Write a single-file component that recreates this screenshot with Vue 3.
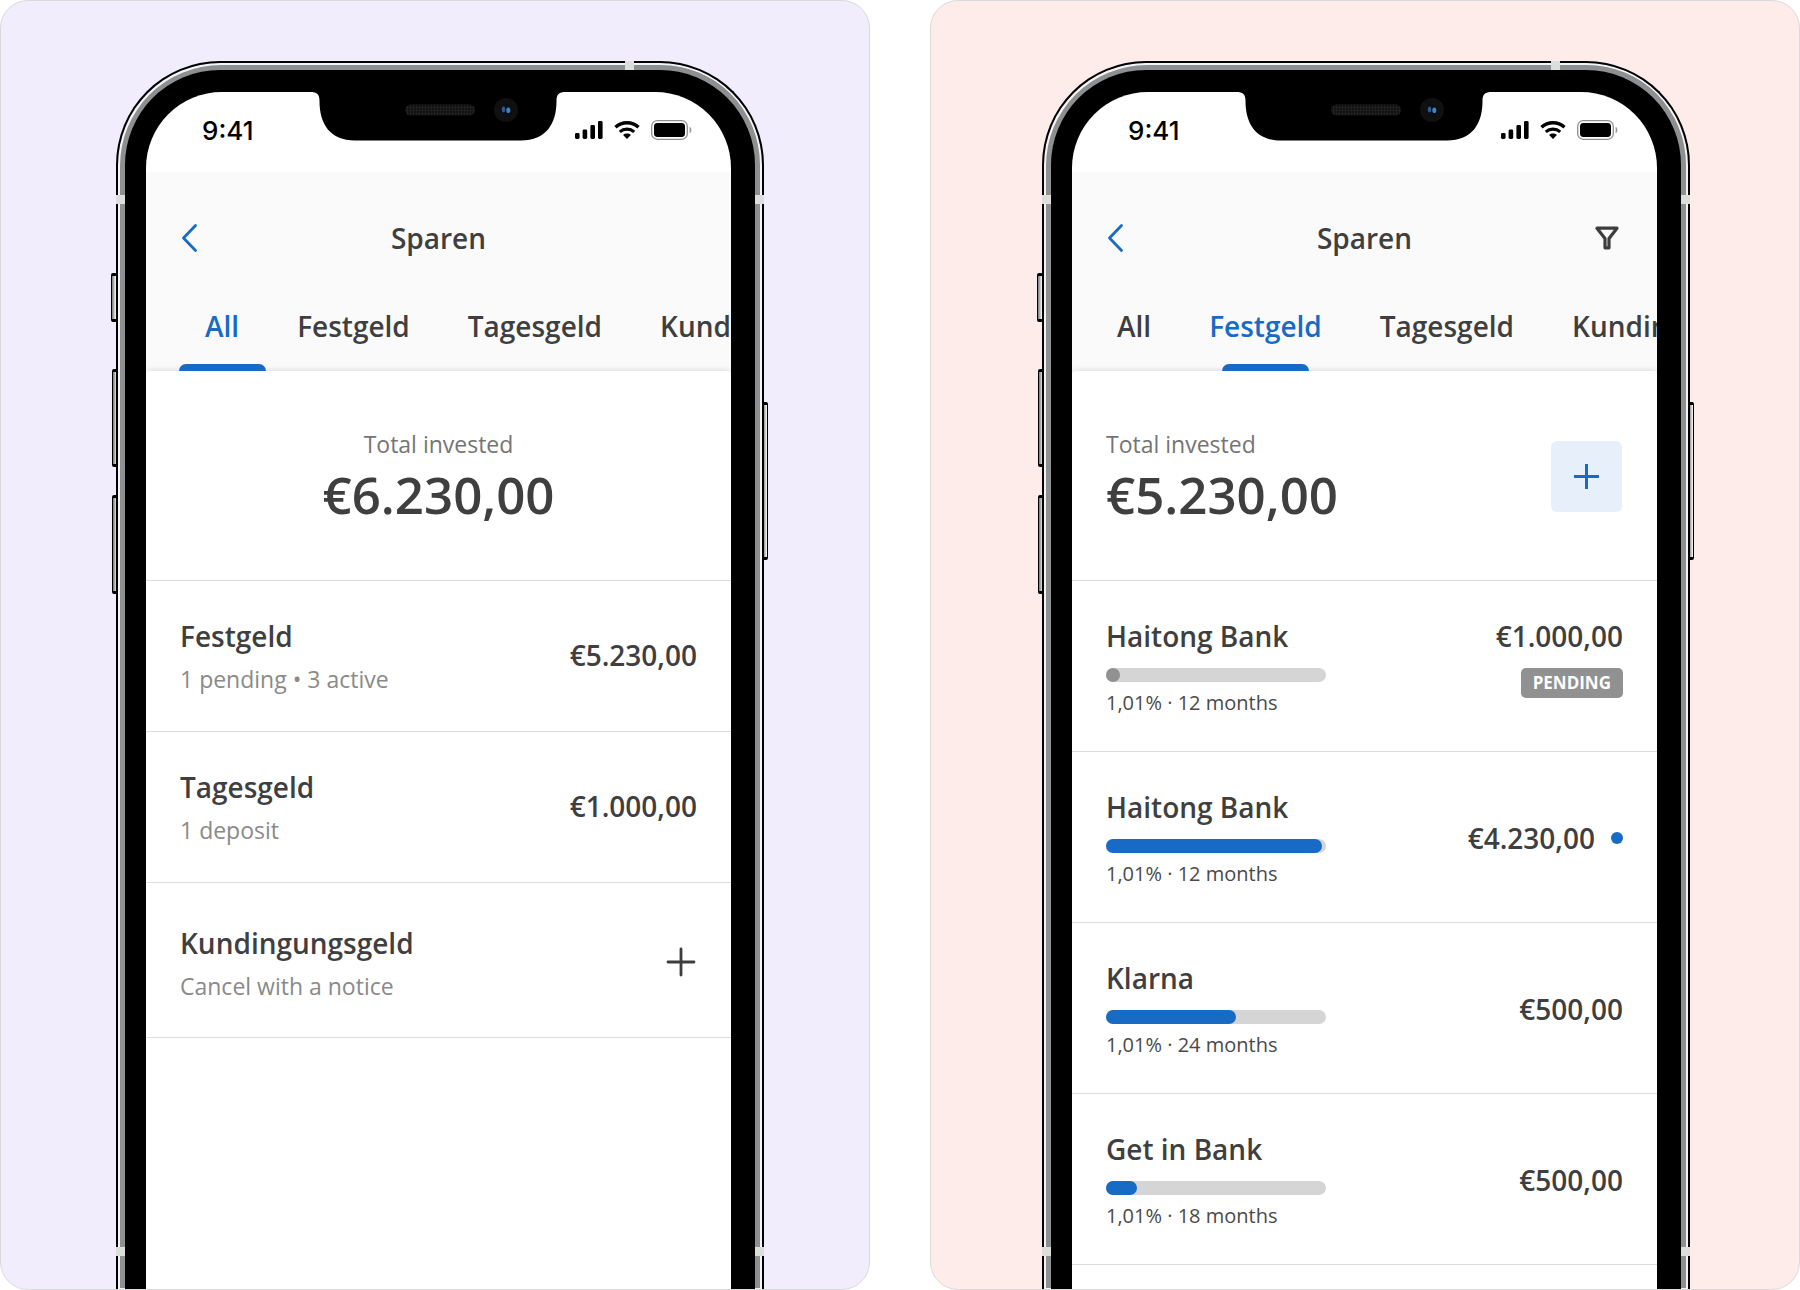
<template>
  <main class="showcase">
    <section v-for="phone in phones" :key="phone.id" class="card" :class="'card-' + phone.id">
      <div class="phone">
        <span class="side-button mute"></span>
        <span class="side-button volume-up"></span>
        <span class="side-button volume-down"></span>
        <span class="side-button power"></span>
        <div class="frame">
          <div class="glass">
            <div class="screen">
              <div class="status-bar">
                <span class="status-time">9:41</span>
                <div class="status-icons">
                  <svg width="28" height="18" viewBox="0 0 28 18">
                    <rect x="0" y="12" width="4.600" height="6" rx="1.400" />
                    <rect x="7.600" y="8.500" width="4.600" height="9.500" rx="1.400" />
                    <rect x="15.400" y="4" width="4.600" height="14" rx="1.400" />
                    <rect x="23" y="0" width="4.600" height="18" rx="1.400" />
                  </svg>
                  <svg width="26" height="18" viewBox="0 0 26 18">
                    <path d="M1.5 6.2C8 .3 18 .3 24.5 6.2" fill="none" stroke="#000" stroke-width="3.4" />
                    <path d="M5.8 10.9c4.2-3.6 10.2-3.6 14.4 0" fill="none" stroke="#000" stroke-width="3.2" />
                    <path d="M13 18l-3.9-4c2.2-1.9 5.6-1.9 7.8 0z" />
                  </svg>
                  <svg width="42" height="20" viewBox="0 0 42 20">
                    <rect x=".7" y=".7" width="35.6" height="18.6" rx="5.6" fill="none" stroke="#8f8f8f" stroke-width="1.3" />
                    <rect x="3" y="3" width="31" height="14" rx="3.4" />
                    <path d="M38.6 6.8c2.4.9 2.4 5.5 0 6.4z" fill="#999" />
                  </svg>
                </div>
              </div>

              <header class="header">
                <div class="nav">
                  <button class="icon-btn" aria-label="Back">
                    <svg width="20" height="32" viewBox="0 0 20 32">
                      <path d="M15.5 3.5L3.5 16l12 12.5" fill="none" stroke="#176bc4" stroke-width="2.8" stroke-linecap="round" stroke-linejoin="round" />
                    </svg>
                  </button>
                  <h1 class="nav-title">Sparen</h1>
                  <button v-if="phone.filter" class="icon-btn icon-btn-right" aria-label="Filter">
                    <svg width="24" height="24" viewBox="0 0 24 24">
                      <path d="M2 2.200h20L14 12.500v9.300h-4v-9.300z" fill="none" stroke="#3d3d3d" stroke-width="3.2" stroke-linejoin="round" />
                    </svg>
                  </button>
                </div>
                <nav class="tabs">
                  <button
                    v-for="tab in tabs"
                    :key="tab"
                    class="tab"
                    :class="{ active: tab === phone.activeTab }"
                    @click="phone.activeTab = tab"
                  >{{ tab }}</button>
                </nav>
              </header>

              <div class="sheet">
                <div class="summary">
                  <div>
                    <p class="summary-label">Total invested</p>
                    <p class="summary-total">{{ phone.total }}</p>
                  </div>
                  <button v-if="phone.deposits" class="add-btn" aria-label="Add deposit">
                    <svg width="25" height="25" viewBox="0 0 25 25">
                      <path d="M12.5 0v25M0 12.500h25" stroke="#176bc4" stroke-width="3" />
                    </svg>
                  </button>
                </div>

                <ul v-if="phone.products" class="list">
                  <li v-for="item in phone.products" :key="item.name" class="row" :class="{ 'row-empty': !item.amount }">
                    <div>
                      <p class="row-name">{{ item.name }}</p>
                      <p class="row-note">{{ item.note }}</p>
                    </div>
                    <p v-if="item.amount" class="row-amount">{{ item.amount }}</p>
                    <button v-else class="plus-btn" aria-label="Open product">
                      <svg width="30" height="30" viewBox="0 0 30 30">
                        <path d="M15 2v26M2 15h26" stroke="#3d3d3d" stroke-width="2.8" stroke-linecap="round" />
                      </svg>
                    </button>
                  </li>
                </ul>

                <ul v-else class="list">
                  <li v-for="item in phone.deposits" :key="item.id" class="row row-deposit">
                    <div class="deposit-info">
                      <p class="row-name">{{ item.name }}</p>
                      <div class="bar">
                        <div class="bar-fill" :class="{ pending: item.pending }" :style="{ width: item.progress + '%' }"></div>
                      </div>
                      <p class="row-terms">{{ item.terms }}</p>
                    </div>
                    <div v-if="item.pending" class="deposit-pending">
                      <p class="row-amount">{{ item.amount }}</p>
                      <span class="badge">PENDING</span>
                    </div>
                    <div v-else class="deposit-amount">
                      <p class="row-amount">{{ item.amount }}</p>
                      <span v-if="item.unread" class="dot"></span>
                    </div>
                  </li>
                </ul>
              </div>
            </div>

            <svg class="notch" width="256" height="50" viewBox="0 0 256 50">
              <defs>
                <pattern :id="'mesh-' + phone.id" width="3" height="3" patternUnits="userSpaceOnUse">
                  <rect width="3" height="3" fill="#111" />
                  <circle cx="1.5" cy="1.5" r=".9" fill="#2a2a2a" />
                </pattern>
              </defs>
              <path d="M0 0h256v1c-7 0-9.500 2-9.500 9C246.500 33 236 49.500 211 49.500H45C20 49.500 9.500 33 9.500 10 9.500 3 7 1 0 1z" />
              <rect x="95" y="13.500" width="70" height="11" rx="5.500" :fill="'url(#mesh-' + phone.id + ')'" />
              <circle cx="196" cy="19" r="12" fill="#101010" />
              <circle cx="196" cy="19" r="5.500" fill="#08101d" />
              <ellipse cx="193.500" cy="18.500" rx="1.700" ry="2.900" fill="#2d5b8c" />
              <ellipse cx="198.300" cy="19.300" rx="2" ry="2.800" fill="#4384bd" />
            </svg>
          </div>
        </div>
        <span class="antenna top"></span>
        <span class="antenna left upper"></span>
        <span class="antenna right upper"></span>
        <span class="antenna left lower"></span>
        <span class="antenna right lower"></span>
      </div>
    </section>
  </main>
</template>

<script setup>
import { ref } from 'vue'

const tabs = ['All', 'Festgeld', 'Tagesgeld', 'Kundingungsgeld']

const phones = ref([
  {
    id: 'overview',
    activeTab: 'All',
    total: '€6.230,00',
    products: [
      { name: 'Festgeld', note: '1 pending • 3 active', amount: '€5.230,00' },
      { name: 'Tagesgeld', note: '1 deposit', amount: '€1.000,00' },
      { name: 'Kundingungsgeld', note: 'Cancel with a notice', amount: null }
    ]
  },
  {
    id: 'deposits',
    activeTab: 'Festgeld',
    filter: true,
    total: '€5.230,00',
    deposits: [
      { id: 1, name: 'Haitong Bank', terms: '1,01% · 12 months', amount: '€1.000,00', progress: 6.5, pending: true },
      { id: 2, name: 'Haitong Bank', terms: '1,01% · 12 months', amount: '€4.230,00', progress: 98, unread: true },
      { id: 3, name: 'Klarna', terms: '1,01% · 24 months', amount: '€500,00', progress: 59 },
      { id: 4, name: 'Get in Bank', terms: '1,01% · 18 months', amount: '€500,00', progress: 14 }
    ]
  }
])
</script>

<style>
body {
  background: #ffffff;
}
</style>

<style scoped>
.showcase {
  display: grid;
  grid-template-columns: 1fr 1fr;
  gap: 60px;
  min-height: 100vh;
  font-family: 'Open Sans', 'Noto Sans', sans-serif;
  color: #3f3f3f;
}

.showcase * { box-sizing: border-box; }

p, h1, ul {
  margin: 0;
  padding: 0;
}

button {
  padding: 0;
  border: none;
  background: none;
  font: inherit;
  color: inherit;
  cursor: pointer;
}

svg { display: block; }

.card {
  display: flex;
  min-width: 0;
  border: 1px solid #dadada;
  border-radius: 28px;
  overflow: hidden;
}
.card-overview {
  padding: 60px 105px 0 115px;
  background: #f1edfd;
}
.card-deposits {
  padding: 60px 109px 0 111px;
  background: #fdecea;
}

/* phone body */
.phone {
  position: relative;
  display: flex;
  flex: 1;
  min-width: 0;
}

.frame {
  position: relative;
  display: flex;
  flex: 1;
  min-width: 0;
  padding: 7px 7px 0;
  border: 2px solid #000;
  border-bottom: none;
  border-radius: 104px 104px 0 0;
  background: #8d8f90;
  box-shadow: inset 1px 1px 0 1px #f4f4f4, inset -1px 0 0 1px #f4f4f4;
}

.glass {
  position: relative;
  flex: 1;
  min-width: 0;
  padding: 22px 24px 0 21px;
  border-radius: 95px 95px 0 0;
  background: #000;
}

.screen {
  display: flex;
  flex-direction: column;
  height: 100%;
  border-radius: 76px 76px 0 0;
  background: #fff;
  overflow: hidden;
}

.notch {
  position: absolute;
  top: 21px;
  left: 50%;
  margin-left: -130px;
}

.antenna {
  position: absolute;
  width: 9px;
  height: 9px;
  background: #dcdedb;
}
.antenna.top { top: 0; right: 130px; }
.antenna.left { left: 0; }
.antenna.right { right: 0; }
.antenna.upper { top: 134px; }
.antenna.lower { bottom: 33px; }

.side-button {
  position: absolute;
  left: -4px;
  width: 6px;
  border: 1px solid #000;
  border-width: 3px 1px;
  border-radius: 2px;
  background: linear-gradient(90deg, #777, #fff);
}
.mute { top: 212px; left: -5px; height: 49px; }
.volume-up { top: 308px; height: 98px; }
.volume-down { top: 434px; height: 99px; }
.power {
  top: 341px;
  left: auto;
  right: -4px;
  height: 158px;
}

/* status bar */
.status-bar {
  display: flex;
  justify-content: space-between;
  height: 80px;
  padding: 22px 38px 0 56px;
}

.status-time {
  font-family: Inter, sans-serif;
  font-size: 26px;
  font-weight: 500;
  line-height: 34px;
  color: #000;
}

.status-icons {
  display: flex;
  align-items: center;
  gap: 11px;
  height: 32px;
}

/* header */
.header {
  padding-top: 46px;
  background: #fafafa;
}

.nav {
  display: grid;
  grid-template-columns: 40px 1fr 40px;
  align-items: center;
  height: 40px;
  padding: 0 34px;
}

.nav-title {
  font-size: 28px;
  font-weight: 600;
  line-height: 40px;
  text-align: center;
}

.icon-btn {
  display: flex;
  align-items: center;
}
.icon-btn-right {
  justify-content: center;
  margin-left: 8px;
}

.tabs {
  display: flex;
  gap: 58px;
  padding: 48px 0 0 59px;
  overflow: hidden;
}
.card-deposits .tabs { padding-left: 45px; }

.tab {
  position: relative;
  flex: none;
  padding-bottom: 25px;
  font-size: 28px;
  font-weight: 600;
  line-height: 40px;
}
.tab.active { color: #176bc4; }
.tab.active::after {
  content: '';
  position: absolute;
  bottom: 0;
  left: 50%;
  z-index: 1;
  width: 87px;
  height: 7px;
  margin-left: -43px;
  border-radius: 7px 7px 0 0;
  background: #176bc4;
}

/* content */
.sheet {
  flex: 1;
  border-radius: 4px 4px 0 0;
  background: #fff;
  box-shadow: 0 0 6px rgba(0, 0, 0, 0.16);
}

.summary {
  display: flex;
  align-items: center;
  justify-content: space-between;
  padding: 58px 35px 56px 34px;
  border-bottom: 1px solid #dcdcdc;
}
.card-overview .summary {
  justify-content: center;
  padding-right: 34px;
  text-align: center;
}

.summary-label {
  font-size: 23px;
  line-height: 30px;
  color: #757575;
}

.summary-total {
  margin-top: 5px;
  font-size: 51px;
  font-weight: 600;
  line-height: 60px;
}

.add-btn {
  display: flex;
  align-items: center;
  justify-content: center;
  width: 71px;
  height: 71px;
  border-radius: 6px;
  background: #e7f0fa;
}

.list { list-style: none; }

.row {
  display: flex;
  align-items: center;
  justify-content: space-between;
  padding: 35px 34px 37px;
  border-bottom: 1px solid #dcdcdc;
}
.row-empty { padding: 40px 35px 36px 34px; }
.row-deposit { padding: 35px 34px 34px; }

.row-name {
  font-size: 28px;
  font-weight: 600;
  line-height: 40px;
}

.row-note {
  margin-top: 8px;
  font-size: 23px;
  line-height: 30px;
  color: #8a8a8a;
}

.row-amount {
  font-size: 28px;
  font-weight: 600;
  line-height: 40px;
}

.deposit-info { width: 220px; }

.bar {
  height: 14px;
  margin-top: 12px;
  border-radius: 7px;
  background: #d5d5d5;
}
.bar-fill {
  height: 100%;
  border-radius: 7px;
  background: #176bc4;
}
.bar-fill.pending { background: #919191; }

.row-terms {
  margin-top: 7px;
  font-size: 20px;
  line-height: 28px;
  color: #4a4a4a;
}

.deposit-pending {
  display: flex;
  flex-direction: column;
  align-items: flex-end;
  align-self: flex-start;
  gap: 12px;
}

.badge {
  padding: 0 12px;
  border-radius: 5px;
  background: #919191;
  font-size: 17px;
  font-weight: 700;
  line-height: 30px;
  color: #fff;
}

.deposit-amount {
  display: flex;
  align-items: center;
  gap: 16px;
}

.dot {
  width: 12px;
  height: 12px;
  border-radius: 50%;
  background: #176bc4;
}
</style>
